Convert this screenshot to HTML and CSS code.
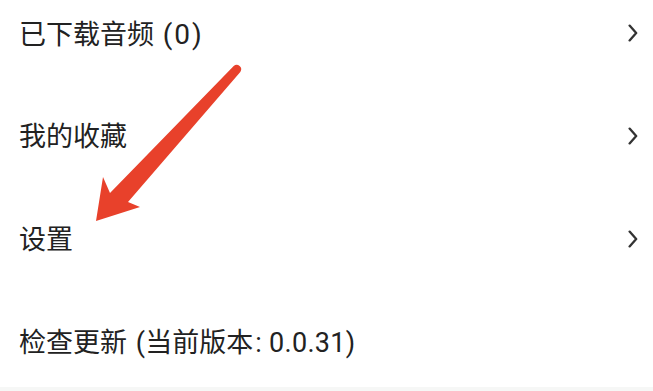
FILE: index.html
```html
<!DOCTYPE html>
<html lang="zh-CN">
<head>
<meta charset="utf-8">
<title>菜单</title>
<link rel="stylesheet" href="styles.css">
</head>
<body>
<div class="page">
  <ul class="menu">
    <li class="row">
      <span class="label">已下载音频 <span class="lat wide">(0)</span></span>
      <svg class="chev" viewBox="0 0 10 18" width="10" height="18"><polyline points="1.6,1.6 8.2,9 1.6,16.4"/></svg>
    </li>
    <li class="row">
      <span class="label">我的收藏</span>
      <svg class="chev" viewBox="0 0 10 18" width="10" height="18"><polyline points="1.6,1.6 8.2,9 1.6,16.4"/></svg>
    </li>
    <li class="row">
      <span class="label">设置</span>
      <svg class="chev" viewBox="0 0 10 18" width="10" height="18"><polyline points="1.6,1.6 8.2,9 1.6,16.4"/></svg>
    </li>
    <li class="row">
      <span class="label">检查更新 <span class="lat">(</span>当前版本<span class="lat">: 0.0.31)</span></span>
    </li>
  </ul>
  <div class="footer"></div>
  <svg class="arrow" viewBox="0 0 653 391" width="653" height="391">
    <path d="M233.7,66 L110,193 L103,177 L96,221 L140,207 L128,202 L240.3,72 A4.5,4.5 0 0 0 233.7,66 Z"/>
  </svg>
</div>
</body>
</html>
```

FILE: styles.css
```css
html, body {
  margin: 0;
  padding: 0;
  background: #ffffff;
}

.page {
  position: relative;
  width: 653px;
  height: 391px;
  display: flex;
  flex-direction: column;
  overflow: hidden;
  font-family: Roboto, "Noto Sans CJK SC", sans-serif;
  color: #222222;
}

.menu {
  list-style: none;
  margin: 0;
  padding: 0;
  flex: 1;
  overflow: hidden;
}

.row {
  height: 103px;
  display: flex;
  align-items: center;
  justify-content: space-between;
  padding: 0 15px 0 19px;
  box-sizing: border-box;
}

.row:first-child {
  margin-top: -17px;
}

.label {
  font-size: 27px;
  line-height: 1;
  letter-spacing: 0;
}

.lat {
  font-size: 27px;
  letter-spacing: 0.3px;
  margin-left: 2px;
}

.lat.wide {
  font-size: 28px;
  letter-spacing: 2px;
}

.chev {
  display: block;
  margin-top: -4px;
}

.chev polyline {
  fill: none;
  stroke: #333333;
  stroke-width: 2.3;
  stroke-linecap: round;
  stroke-linejoin: round;
}

.footer {
  height: 4px;
  background: #f6f7f6;
}

.arrow {
  position: absolute;
  left: 0;
  top: 0;
  pointer-events: none;
}

.arrow path {
  fill: #e8412b;
}
```
